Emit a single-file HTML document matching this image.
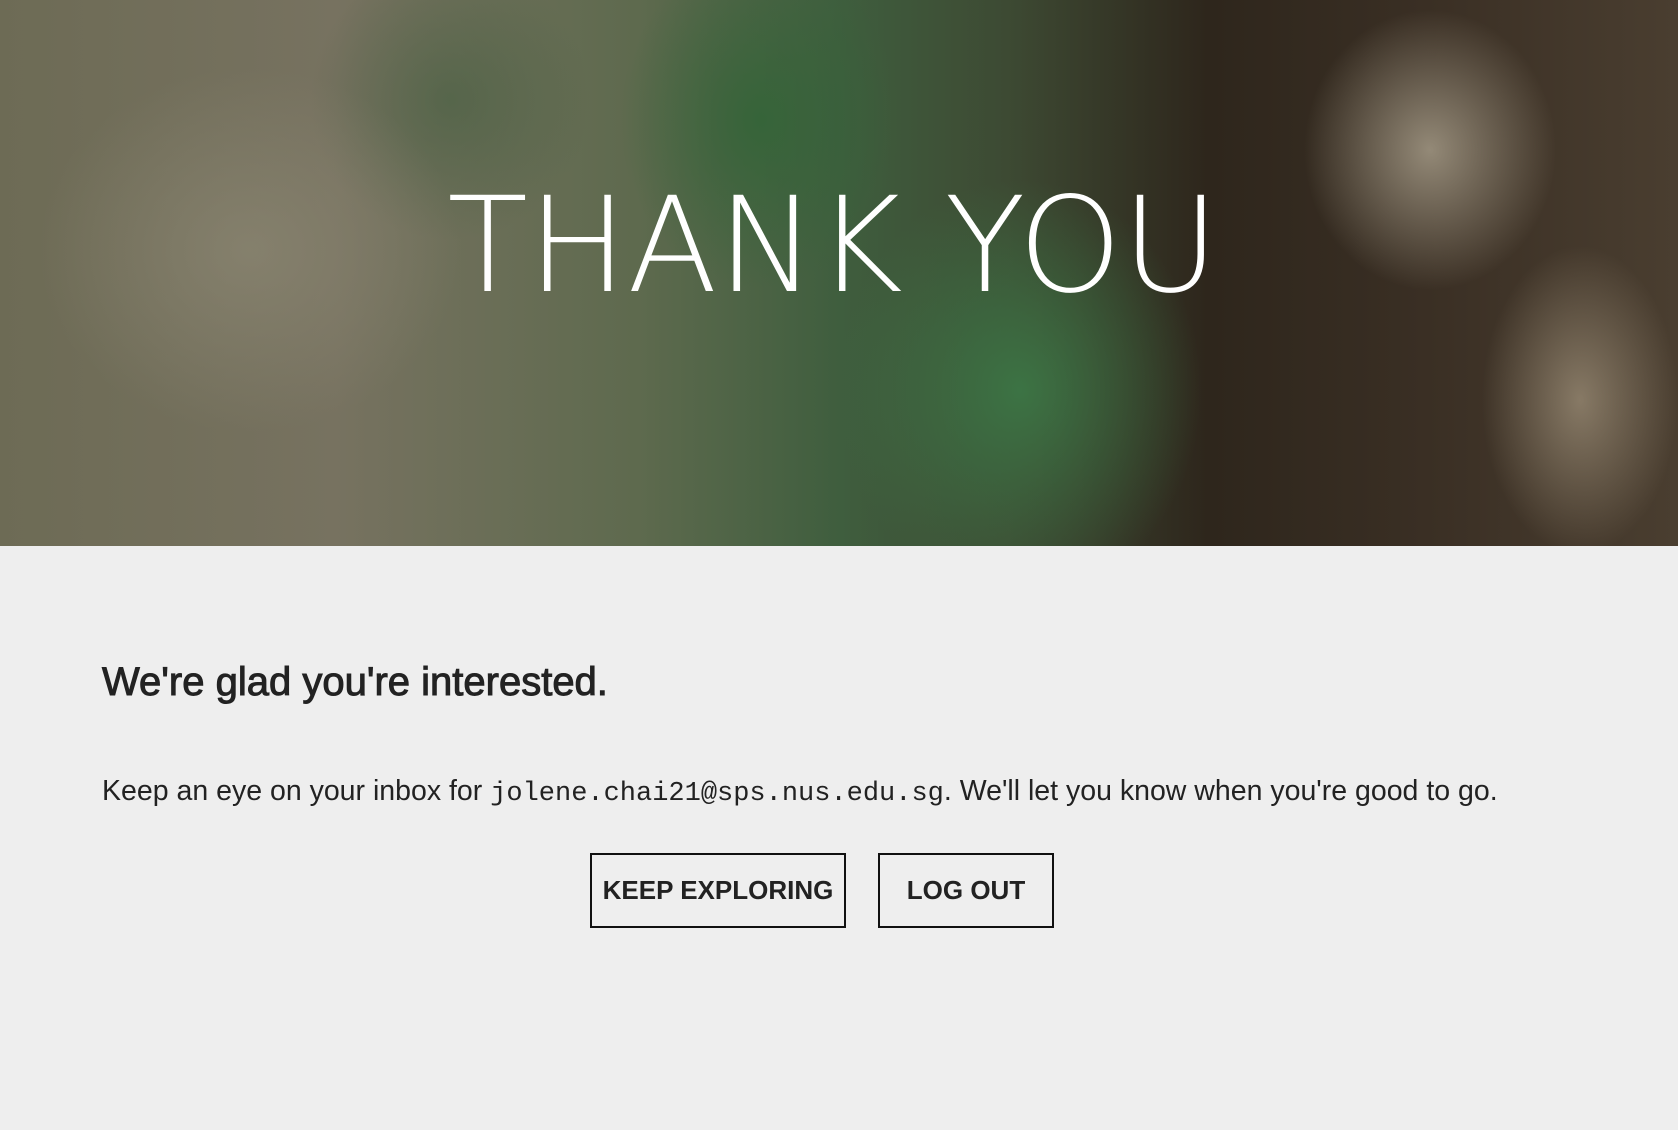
<!DOCTYPE html>
<html><head><meta charset="utf-8"><style>
html,body{margin:0;padding:0;width:1678px;height:1130px;background:#eeeeee;overflow:hidden;font-family:"Liberation Sans",sans-serif;}
.hero{position:absolute;left:0;top:0;width:1678px;height:546px;overflow:hidden;
background:
radial-gradient(ellipse 260px 300px at 1020px 390px, rgba(60,120,70,0.9), rgba(60,120,70,0) 70%),
radial-gradient(ellipse 200px 240px at 760px 120px, rgba(50,100,55,0.85), rgba(50,100,55,0) 70%),
radial-gradient(ellipse 180px 200px at 1430px 150px, rgba(170,160,140,0.8), rgba(170,160,140,0) 70%),
radial-gradient(ellipse 140px 220px at 1580px 400px, rgba(180,165,140,0.6), rgba(180,165,140,0) 70%),
radial-gradient(ellipse 300px 260px at 250px 250px, rgba(140,135,115,0.7), rgba(140,135,115,0) 70%),
radial-gradient(ellipse 200px 200px at 450px 100px, rgba(70,95,65,0.6), rgba(70,95,65,0) 70%),
linear-gradient(90deg,#6d6b55 0%,#777260 20%,#5e6a4e 38%,#3f5e3e 50%,#3d4a33 60%,#2e261c 72%,#3a2f24 85%,#4a3e30 100%);}
.hero h1{position:absolute;left:0;right:12px;top:180px;margin:0;text-align:center;color:#fff;font-size:132px;letter-spacing:0;line-height:1;font-family:"DejaVu Sans","Liberation Sans",sans-serif;font-weight:200;}
h2{position:absolute;left:102px;top:660px;margin:0;font-size:40px;font-weight:normal;color:#222;font-family:"Liberation Sans",sans-serif;-webkit-text-stroke:1px #222;}
p{position:absolute;left:102px;top:775px;margin:0;font-size:28.5px;color:#222;white-space:nowrap;}
p code{font-family:"Liberation Mono",monospace;font-size:27px;}
.btn{position:absolute;top:853px;height:75px;border:2px solid #111;box-sizing:border-box;display:flex;align-items:center;justify-content:center;font-size:26px;font-weight:bold;color:#222;}
</style></head><body>
<div class="hero"><h1>THANK YOU</h1></div>
<h2>We're glad you're interested.</h2>
<p>Keep an eye on your inbox for <code>jolene.chai21@sps.nus.edu.sg</code>. We'll let you know when you're good to go.</p>
<div class="btn" style="left:590px;width:256px">KEEP EXPLORING</div>
<div class="btn" style="left:878px;width:176px">LOG OUT</div>
</body></html>
